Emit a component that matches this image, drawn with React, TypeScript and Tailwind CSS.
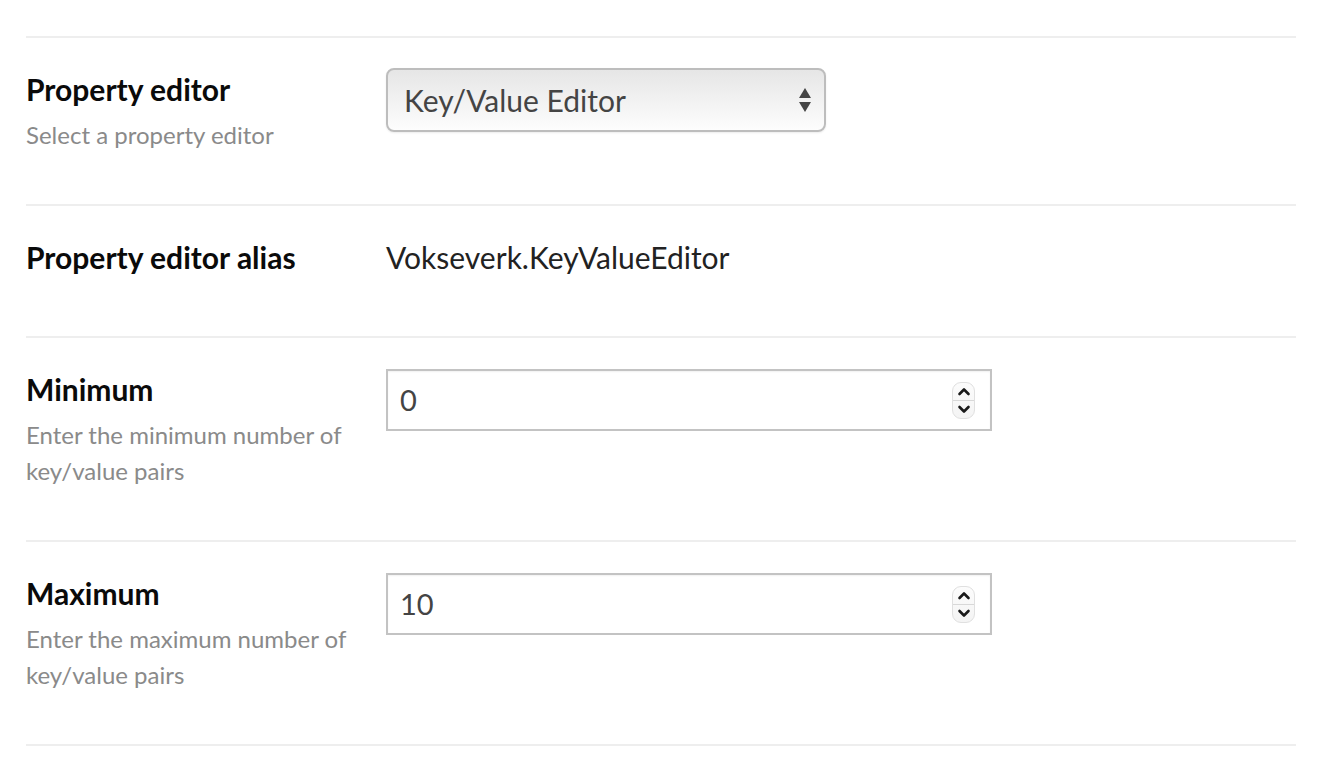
import React from "react";

const font = { fontFamily: "Lato, 'Noto Sans', sans-serif" };

function Spinner() {
  return (
    <div className="flex h-[37px] w-[23px] flex-col items-center justify-between rounded-[9px] border border-[#e0e0e0] bg-gradient-to-b from-[#fcfcfc] to-[#f4f4f4] py-[4px]">
      <svg width="14" height="9" viewBox="0 0 14 9">
        <path d="M2.5 7 L7 2.5 L11.5 7" fill="none" stroke="#1a1a1a" strokeWidth="2.6" strokeLinecap="round" strokeLinejoin="round" />
      </svg>
      <div className="h-px w-full bg-[#d8d8d8]" />
      <svg width="14" height="9" viewBox="0 0 14 9">
        <path d="M2.5 2 L7 6.5 L11.5 2" fill="none" stroke="#1a1a1a" strokeWidth="2.6" strokeLinecap="round" strokeLinejoin="round" />
      </svg>
    </div>
  );
}

function NumberBox({ value }: { value: string }) {
  return (
    <div className="flex h-[62px] w-[606px] items-center justify-between border-2 border-[#c3c3c3] bg-white pl-[12px] pr-[15px] shadow-[inset_0_1px_2px_rgba(0,0,0,0.06)]">
      <span className="text-[29px] text-[#444]">{value}</span>
      <Spinner />
    </div>
  );
}

function Label({ title, desc }: { title: string; desc?: string[] }) {
  return (
    <div className="w-[360px] shrink-0 pr-[10px]">
      <div className="h-[40px] text-[30px] font-bold leading-[40px] text-[#0a0a0a]">{title}</div>
      {desc && (
        <div className="mt-[8px] text-[24px] leading-[36px] text-[#8a8a8a]">
          {desc.map((d) => (
            <div key={d}>{d}</div>
          ))}
        </div>
      )}
    </div>
  );
}

export default function App() {
  return (
    <div className="min-h-[776px] w-[1328px] bg-white" style={font}>
      <div className="ml-[26px] w-[1270px] pt-[36px]">
        <div className="border-t-2 border-[#eeeeee]" />
        {/* Row 1 */}
        <div className="flex border-b-2 border-[#eeeeee] pt-[31px] pb-[51px]">
          <Label title="Property editor" desc={["Select a property editor"]} />
          <div className="-mt-[1px]">
            <div className="relative flex h-[64px] w-[440px] items-center rounded-[8px] border-2 border-[#bdbdbd] bg-gradient-to-b from-[#e6e6e6] to-[#fdfdfd] pl-[16px] shadow-[0_1px_2px_rgba(0,0,0,0.08)]">
              <span className="text-[30px] text-[#444]">Key/Value Editor</span>
              <svg className="absolute right-[12px] top-1/2 -translate-y-1/2" width="14" height="26" viewBox="0 0 14 26">
                <path d="M7 1 L13 11 L1 11 Z" fill="#444" />
                <path d="M1 15 L13 15 L7 25 Z" fill="#444" />
              </svg>
            </div>
          </div>
        </div>
        {/* Row 2 */}
        <div className="flex border-b-2 border-[#eeeeee] pt-[31px] pb-[59px]">
          <Label title="Property editor alias" />
          <div className="h-[40px] text-[30px] leading-[40px] text-[#222]">Vokseverk.KeyValueEditor</div>
        </div>
        {/* Row 3 */}
        <div className="flex border-b-2 border-[#eeeeee] pt-[31px] pb-[51px]">
          <Label title="Minimum" desc={["Enter the minimum number of", "key/value pairs"]} />
          <div>
            <NumberBox value="0" />
          </div>
        </div>
        {/* Row 4 */}
        <div className="flex border-b-2 border-[#eeeeee] pt-[31px] pb-[51px]">
          <Label title="Maximum" desc={["Enter the maximum number of", "key/value pairs"]} />
          <div>
            <NumberBox value="10" />
          </div>
        </div>
      </div>
    </div>
  );
}
